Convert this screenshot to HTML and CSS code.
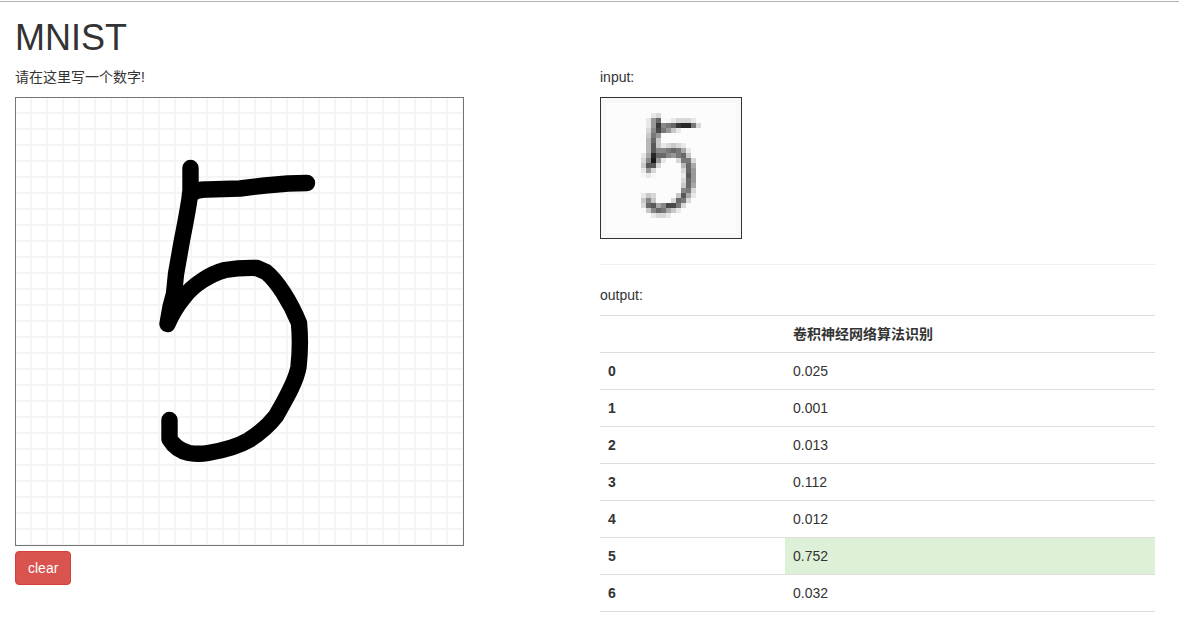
FILE: index.html
```html
<!DOCTYPE html>
<html lang="zh">
<head>
<meta charset="utf-8">
<meta name="viewport" content="width=device-width, initial-scale=1">
<title>MNIST</title>
<link rel="stylesheet" href="styles.css">
</head>
<body>
<main class="page">
  <h1 class="title">MNIST</h1>
  <div class="columns">
    <section class="column">
      <p class="caption">请在这里写一个数字!</p>
      <svg class="board" width="449" height="449" viewBox="0 0 449 449" role="img" aria-label="5">
        <defs>
          <pattern id="grid" width="16" height="16" patternUnits="userSpaceOnUse">
            <path d="M0 0h16v1h-15v15h-1zM15 1h1v15h-1zM1 15h14v1h-14z" fill="#f5f5f5"/>
          </pattern>
        </defs>
        <rect width="449" height="449" fill="url(#grid)"/>
        <g fill="none" stroke="#000" stroke-width="16.400" stroke-linecap="round" stroke-linejoin="round">
          <path d="M175.500 71V94Q174 108 167 143L161 177 159 197 155.500 210 152.500 227Q159 212 169 200C178 188 195 177 210 173Q225 170.500 242 171L251 175C262 184 275 204 284 226Q286 248 283.500 270C281 285 270 303 261 319Q251 332 234 343C222 350 205 354 193 356Q184 357.500 174 356 161 353 154.500 342V323"/>
          <path d="M175 97Q183 92 192 92.500L225 91.500 250 88.500 273 86.500 292 86"/>
        </g>
        <rect x=".5" y=".5" width="448" height="448" fill="none" stroke="#757575"/>
      </svg>
      <button class="clear" type="button">clear</button>
    </section>
    <section class="column">
      <p class="caption">input:</p>
      <canvas class="preview" id="input" width="28" height="28"></canvas>
      <hr class="divider">
      <p class="caption">output:</p>
      <table class="results">
        <thead>
          <tr><td></td><th scope="col">卷积神经网络算法识别</th></tr>
        </thead>
        <tbody>
          <tr><th scope="row">0</th><td>0.025</td></tr>
          <tr><th scope="row">1</th><td>0.001</td></tr>
          <tr><th scope="row">2</th><td>0.013</td></tr>
          <tr><th scope="row">3</th><td>0.112</td></tr>
          <tr><th scope="row">4</th><td>0.012</td></tr>
          <tr><th scope="row">5</th><td class="best">0.752</td></tr>
          <tr><th scope="row">6</th><td>0.032</td></tr>
        </tbody>
      </table>
    </section>
  </div>
</main>
<script src="preview.js"></script>
</body>
</html>
```
FILE: styles.css
```css
* {
  box-sizing: border-box;
}

body {
  margin: 0;
  padding-top: 1px;
  background: #fff;
  color: #333;
  font: 14px/20px "Liberation Sans", Arial, "Noto Sans CJK SC", sans-serif;
}

.page {
  padding: 16px 24px 0 15px;
  border-top: 1px solid #b0b0b0;
}

.title {
  margin: 0 0 9px;
  font-size: 36px;
  font-weight: 500;
  line-height: 40px;
}

.columns {
  display: grid;
  grid-template-columns: 1fr 1fr;
  gap: 30px;
}

.column {
  min-width: 0;
}

.caption {
  margin: 0 0 10px;
}

.board {
  display: block;
  max-width: 100%;
  margin-bottom: 5px;
}

.clear {
  display: block;
  padding: 6px 12px;
  border: 1px solid #d43f3a;
  border-radius: 4px;
  background: #d9534f;
  color: #fff;
  font: inherit;
  cursor: pointer;
}

.preview {
  display: block;
  width: 142px;
  height: 142px;
  border: 1px solid #333;
  image-rendering: pixelated;
}

.divider {
  margin: 25px 0 20px;
  border: 0;
  border-top: 1px solid #eee;
}

.results {
  width: 100%;
  table-layout: fixed;
  border-collapse: collapse;
  border-bottom: 1px solid #ddd;
}

.results th,
.results td {
  padding: 8px;
  border-top: 1px solid #ddd;
  text-align: left;
}

.results td:first-child,
.results th:first-child {
  width: 33.33%;
}

.results .best {
  background: #dff0d8;
}
```
FILE: preview.js
```js
// Grey levels of the 28x28 network input, rows 3-23, columns 8-20, 0 = black.
const rows = [
  "..ed.........",
  ".e96ffeddde..",
  ".e938763227d.",
  ".d8479ce.....",
  ".c79.........",
  ".b6c.........",
  ".b5cedcde....",
  ".b588767ae...",
  "ea2668976c...",
  "d819e..d77d..",
  "c55d....b6a..",
  "e9d.....d69..",
  "fef.....e59..",
  "........d69..",
  "........c6a..",
  "........87d..",
  "ecd....c5ae..",
  "c8c...d67d...",
  "d65a8447d....",
  "fc867ace.....",
  "..edde......."
];
const context = document.getElementById("input").getContext("2d");
context.fillStyle = "#f8f8f8";
context.fillRect(0, 0, 28, 28);
context.fillStyle = "#fcfcfc";
context.fillRect(1, 1, 26, 26);
rows.forEach((row, y) => {
  [...row].forEach((level, x) => {
    if (level === ".") return;
    const grey = parseInt(level, 16) * 16 + 8;
    context.fillStyle = `rgb(${grey}, ${grey}, ${grey})`;
    context.fillRect(x + 8, y + 3, 1, 1);
  });
});
```
